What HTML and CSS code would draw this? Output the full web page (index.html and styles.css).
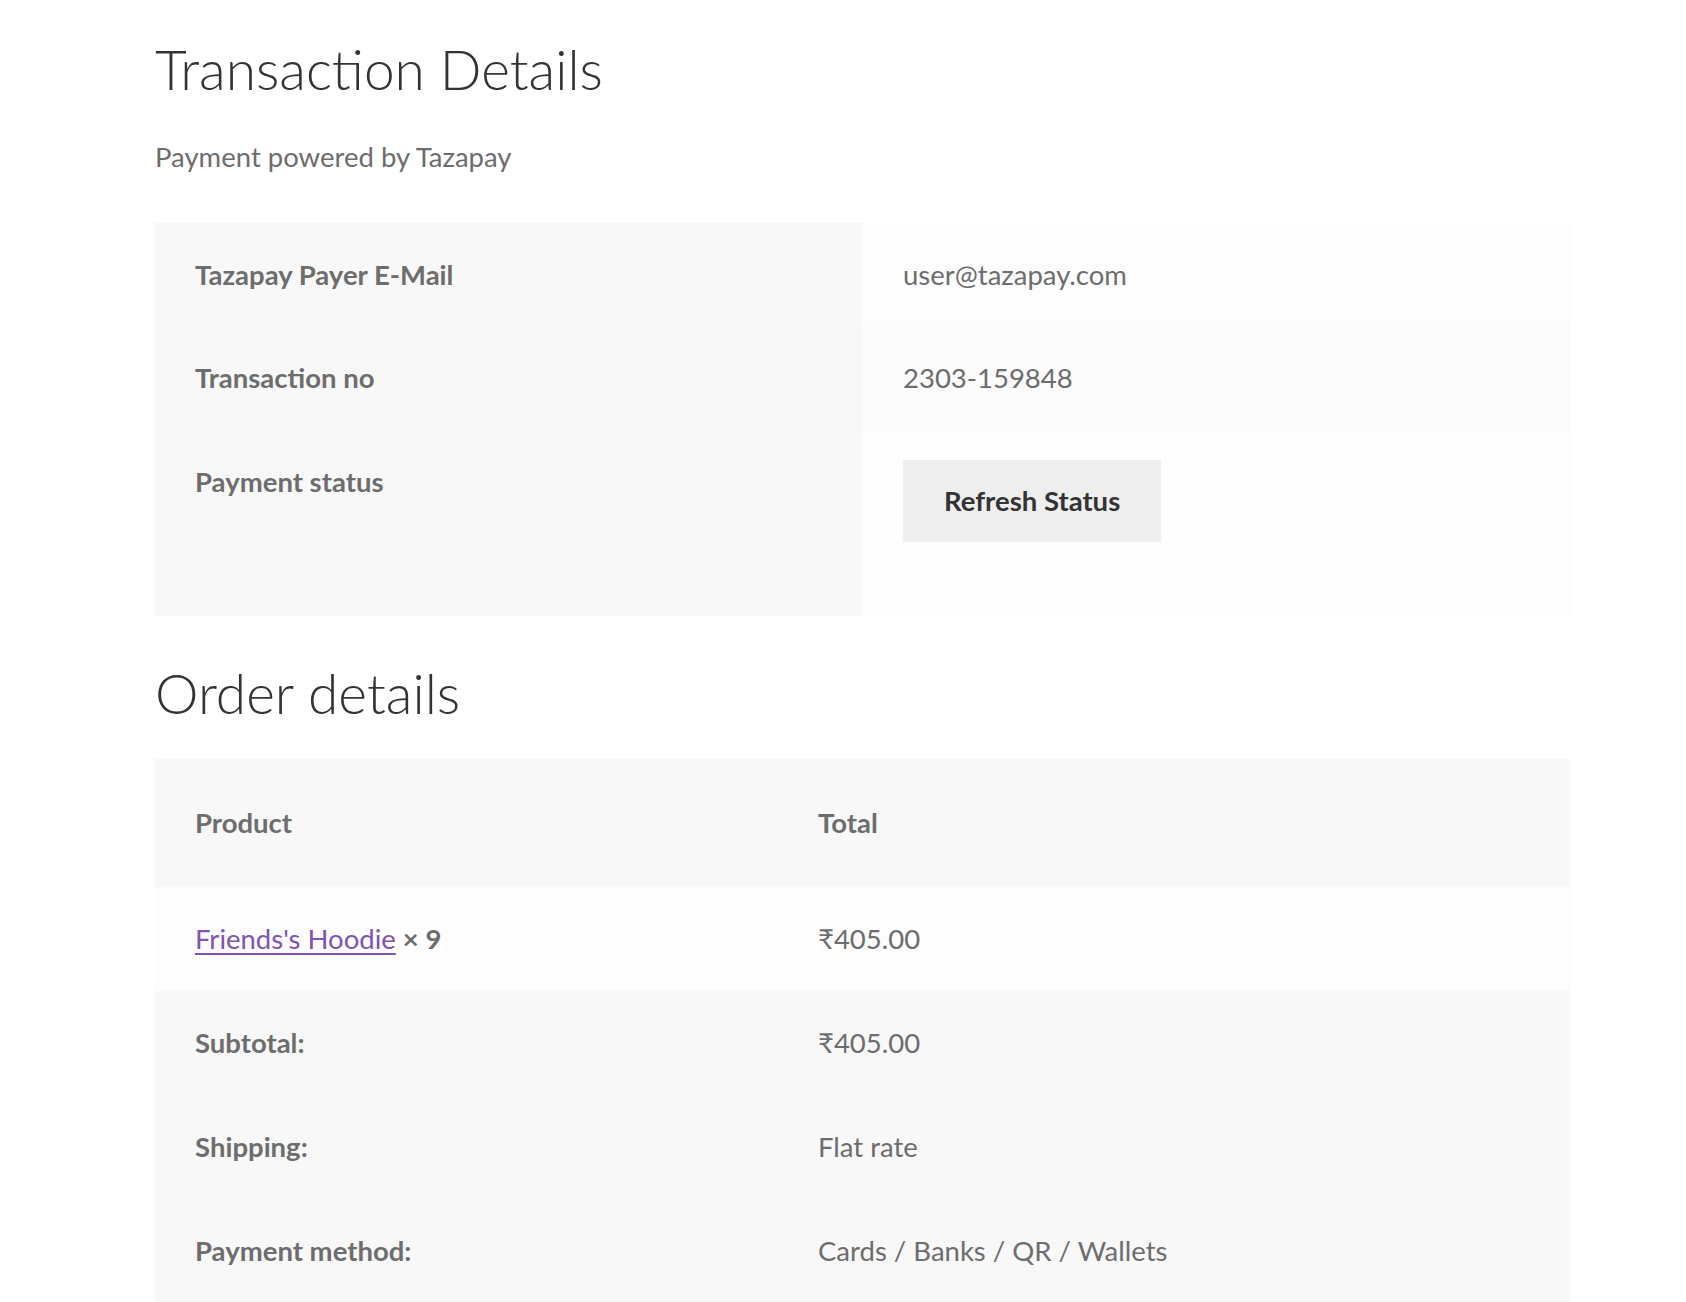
FILE: index.html
```html
<!DOCTYPE html>
<html lang="en">
<head>
<meta charset="utf-8">
<title>Transaction Details</title>
<link rel="stylesheet" href="styles.css">
</head>
<body>
<main class="page">
  <h2 class="page-title">Transaction Details</h2>
  <p class="powered">Payment powered by Tazapay</p>

  <table class="info-table">
    <tbody>
      <tr>
        <th>Tazapay Payer E-Mail</th>
        <td>user@tazapay.com</td>
      </tr>
      <tr>
        <th>Transaction no</th>
        <td>2303-159848</td>
      </tr>
      <tr>
        <th>Payment status</th>
        <td><div class="btn-wrap"><button class="btn" type="button">Refresh Status</button></div></td>
      </tr>
    </tbody>
  </table>

  <h2 class="section-title">Order details</h2>

  <table class="order-table">
    <thead>
      <tr>
        <th class="col-product">Product</th>
        <th>Total</th>
      </tr>
    </thead>
    <tbody>
      <tr>
        <td><a href="#" class="product-link">Friends's Hoodie</a> <strong class="qty">×&nbsp;9</strong></td>
        <td>₹405.00</td>
      </tr>
    </tbody>
    <tfoot>
      <tr>
        <th>Subtotal:</th>
        <td>₹405.00</td>
      </tr>
      <tr>
        <th>Shipping:</th>
        <td>Flat rate</td>
      </tr>
      <tr>
        <th>Payment method:</th>
        <td>Cards / Banks / QR / Wallets</td>
      </tr>
    </tfoot>
  </table>
</main>
</body>
</html>
```
FILE: styles.css
```css
html, body {
  margin: 0;
  padding: 0;
  background: #ffffff;
}

body {
  font-family: Lato, "Open Sans", "Noto Sans", sans-serif;
  font-size: 27.5px;
  color: #6d6d6d;
}

.page {
  width: 1416px;
  margin-left: 154px;
  padding-top: 36px;
}

.page-title,
.section-title {
  font-family: Lato, "Open Sans", sans-serif;
  font-weight: 300;
  font-size: 55px;
  line-height: 1.2;
  color: #333333;
  margin: 0;
  padding-left: 1px;
}

.powered {
  margin: 33px 0 0;
  line-height: 44.5px;
  padding-left: 1px;
}

table {
  border-collapse: collapse;
  border-spacing: 0;
  width: 1416px;
  table-layout: fixed;
}

th, td {
  box-sizing: border-box;
  text-align: left;
  vertical-align: top;
  padding: 29px 41px;
  line-height: 45.5px;
}

th {
  font-weight: 700;
  background: #f8f8f8;
}

td {
  font-weight: 400;
  background: #fdfdfd;
}

.info-table {
  margin-top: 43px;
}

.info-table th {
  width: 708px;
}

.info-table tbody tr:nth-child(2n) td {
  background: #fbfbfb;
}

.btn-wrap {
  padding-top: 1px;
  padding-bottom: 45px;
}

.btn {
  display: block;
  border: 0;
  border-radius: 0;
  margin: 0;
  background: #eeeeee;
  color: #333333;
  font-family: Lato, "Open Sans", sans-serif;
  font-size: 27.5px;
  font-weight: 700;
  line-height: 46px;
  padding: 18px 41px;
  cursor: pointer;
}

.section-title {
  margin-top: 44px;
}

.order-table {
  margin-top: 33px;
}

.order-table th,
.order-table td {
  line-height: 46px;
}

.order-table .col-product {
  width: 623px;
}

.order-table thead th {
  padding-top: 41px;
  padding-bottom: 41px;
  vertical-align: middle;
}

.order-table tfoot th,
.order-table tfoot td {
  background: #f8f8f8;
}

.product-link {
  color: #7f54b3;
  text-decoration: underline;
  text-underline-offset: 4px;
  text-decoration-thickness: 2px;
}

.qty {
  font-weight: 700;
  color: #6d6d6d;
}
```
